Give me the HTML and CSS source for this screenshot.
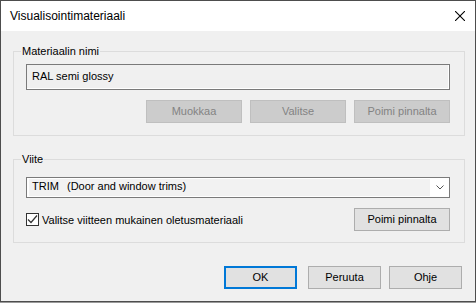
FILE: index.html
```html
<!DOCTYPE html>
<html lang="fi">
<head>
    <meta charset="UTF-8">
    <title>Visualisointimateriaali</title>
    <link rel="stylesheet" href="styles.css">
</head>
<body>
    <div class="window">
        <div class="titlebar">
            <span class="title">Visualisointimateriaali</span>
            <svg class="close" width="10" height="10" viewBox="0 0 10 10">
                <path d="M0 0 L10 10 M10 0 L0 10" stroke="#000" stroke-width="1.1" fill="none"/>
            </svg>
        </div>
        <div class="content">
            <fieldset class="group group-name">
                <legend>Materiaalin nimi</legend>
                <div class="field">RAL semi glossy</div>
                <div class="button-row">
                    <button class="btn" disabled>Muokkaa</button>
                    <button class="btn" disabled>Valitse</button>
                    <button class="btn" disabled>Poimi pinnalta</button>
                </div>
            </fieldset>
            <fieldset class="group group-ref">
                <legend>Viite</legend>
                <div class="combo">
                    <div class="combo-text"><span class="code">TRIM</span>(Door and window trims)</div>
                    <div class="combo-arrow">
                        <svg width="8" height="5" viewBox="0 0 8 5">
                            <polyline points="0.5,0.5 4,4 7.5,0.5" stroke="#555" stroke-width="1" fill="none"/>
                        </svg>
                    </div>
                </div>
                <div class="check-row">
                    <label class="check">
                        <span class="box">
                            <svg width="11" height="11" viewBox="0 0 11 11">
                                <polyline points="1,5.5 4,8.5 10,1.5" stroke="#333" stroke-width="1.2" fill="none"/>
                            </svg>
                        </span>
                        Valitse viitteen mukainen oletusmateriaali
                    </label>
                    <button class="btn">Poimi pinnalta</button>
                </div>
            </fieldset>
            <div class="dialog-buttons">
                <button class="btn btn-default">OK</button>
                <button class="btn">Peruuta</button>
                <button class="btn">Ohje</button>
            </div>
        </div>
    </div>
</body>
</html>
```

FILE: styles.css
```css
* {
    margin: 0;
    padding: 0;
    box-sizing: border-box;
    font-family: "Liberation Sans", Arial, sans-serif;
}
body {
    background-color: #9a9a9a;
    color: #000;
    font-size: 11px;
}
.window {
    width: 476px;
    height: 302px;
    border: 1px solid #4d4d4d;
    background-color: #f0f0f0;
    display: flex;
    flex-direction: column;
}
.titlebar {
    height: 30px;
    background-color: #fff;
    display: flex;
    align-items: center;
    justify-content: space-between;
    padding: 0 10px 0 9px;
}
.titlebar .title {
    font-size: 12px;
    line-height: 30px;
}
.content {
    flex: 1;
    padding: 13px 10px 0 12px;
}
.group {
    border: 1px solid #dcdcdc;
    padding: 0 14px 12px 12px;
}
.group legend {
    margin-left: -5px;
    padding: 0 1px;
    line-height: 14px;
}
.field {
    margin-top: 6px;
    height: 26px;
    border: 1px solid #7a7a7a;
    box-shadow: inset -1px -1px 0 #fff;
    padding-left: 5px;
    line-height: 22px;
}
.button-row {
    margin-top: 10px;
    display: flex;
    justify-content: flex-end;
    gap: 8px;
}
.btn {
    width: 96px;
    height: 23px;
    border: 1px solid #adadad;
    background-color: #e1e1e1;
    color: #000;
    font-size: 11px;
    line-height: 20px;
    padding-bottom: 1px;
}
.btn:disabled {
    background-color: #cccccc;
    border-color: #bfbfbf;
    color: #838383;
}
.group-ref {
    margin-top: 16px;
    padding-bottom: 11px;
}
.combo {
    margin-top: 11px;
    height: 21px;
    border: 1px solid #7a7a7a;
    background-color: #fff;
    padding: 1px 0 1px 2px;
    display: flex;
}
.combo-text {
    flex: 1;
    height: 17px;
    line-height: 15px;
    background-color: #f2f2f2;
    padding-left: 3px;
}
.combo-text .code {
    display: inline-block;
    width: 35px;
}
.combo-arrow {
    width: 19px;
    display: flex;
    align-items: center;
    justify-content: center;
    padding-left: 1px;
}
.check-row {
    margin-top: 10px;
    display: flex;
    align-items: center;
    justify-content: space-between;
}
.check {
    display: flex;
    align-items: center;
    gap: 3px;
    line-height: 14px;
}
.check .box {
    width: 13px;
    height: 13px;
    border: 1px solid #333;
    background-color: #fff;
    display: flex;
}
.dialog-buttons {
    margin-top: 23px;
    margin-right: 3px;
    display: flex;
    justify-content: flex-end;
    gap: 8px;
}
.dialog-buttons .btn {
    width: 73px;
}
.dialog-buttons .btn-default {
    border: 2px solid #0078d7;
    line-height: 18px;
    margin-right: 3px;
}
```
